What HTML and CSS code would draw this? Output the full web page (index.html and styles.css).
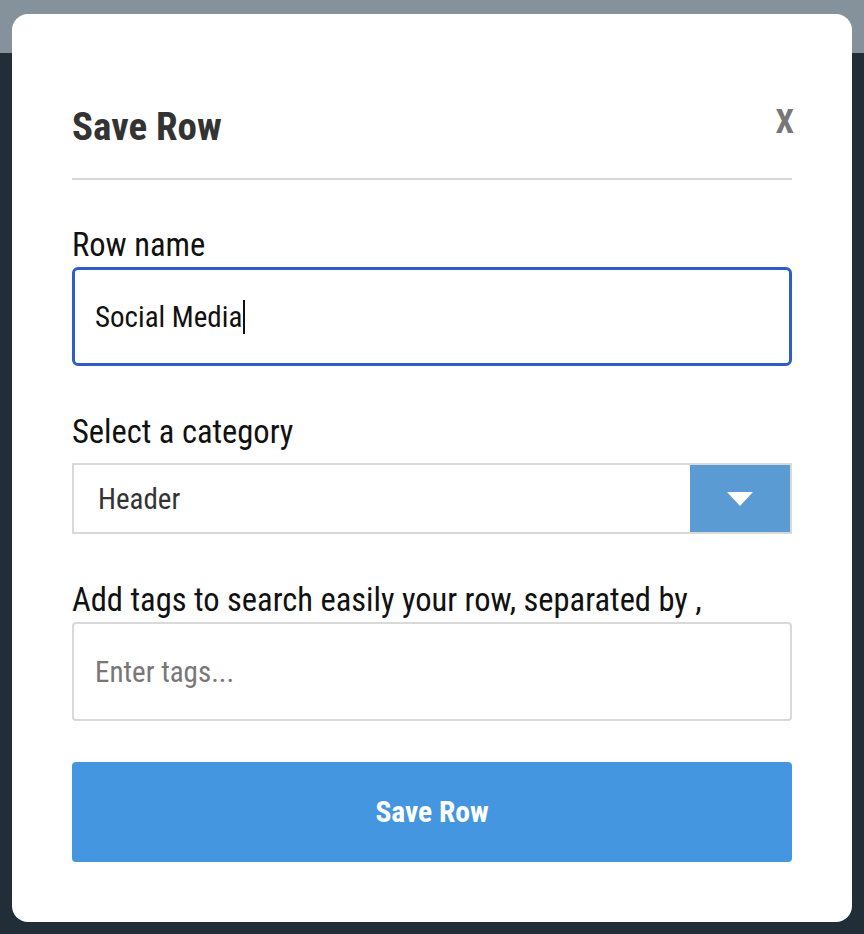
FILE: index.html
```html
<!DOCTYPE html>
<html lang="en">
  <head>
    <meta charset="UTF-8" />
    <meta name="viewport" content="width=device-width, initial-scale=1.0" />
    <title>Save Row</title>
    <link rel="stylesheet" href="styles.css">
  </head>
  <body>
    <div class="modal">
      <div class="modal-head">
        <h1>Save Row</h1>
        <span class="close">X</span>
      </div>
      <div class="field field-name">
        <label>Row name</label>
        <div class="text-box is-focused">Social Media<span class="caret"></span></div>
      </div>
      <div class="field field-category">
        <label>Select a category</label>
        <div class="select-box">
          <span class="select-value">Header</span>
          <span class="select-arrow"><span class="triangle"></span></span>
        </div>
      </div>
      <div class="field field-tags">
        <label>Add tags to search easily your row, separated by ,</label>
        <div class="text-box tags-box"><span class="placeholder">Enter tags...</span></div>
      </div>
      <button class="save-btn">Save Row</button>
    </div>
  </body>
</html>
```

FILE: styles.css
```css
html,
body {
  height: 100%;
  margin: 0;
}
body {
  background: linear-gradient(#85919b 0, #85919b 53px, #212e38 53px);
  font-family: "Roboto Condensed", Roboto, sans-serif;
  font-stretch: condensed;
}
.modal {
  margin: 14px 12px 0;
  padding: 89px 60px 60px;
  background-color: #fff;
  border-radius: 16px;
}
.modal-head {
  display: flex;
  justify-content: space-between;
  padding-bottom: 27px;
  border-bottom: 2px solid #d9d9d9;
}
.modal-head h1 {
  margin: 0;
  font-size: 39px;
  line-height: 48px;
  font-weight: 700;
  color: #333;
}
.close {
  margin-top: -5px;
  margin-right: -2px;
  font-size: 33px;
  line-height: 48px;
  font-weight: 700;
  color: #777;
}
.field label {
  display: block;
  font-size: 32.5px;
  line-height: 36px;
  color: #111;
}
.field-name {
  margin-top: 47px;
}
.field-category {
  margin-top: 48px;
}
.field-tags {
  margin-top: 48px;
}
.text-box {
  display: flex;
  align-items: center;
  box-sizing: border-box;
  height: 99px;
  margin-top: 4px;
  padding-left: 21px;
  border: 2px solid #d9d9d9;
  border-radius: 4px;
  font-size: 29px;
  color: #111;
}
.text-box.is-focused {
  padding-left: 20px;
  border: 3px solid #2b5fc7;
  border-radius: 6px;
}
.caret {
  display: inline-block;
  width: 2px;
  height: 34px;
  margin-left: 1px;
  background-color: #111;
}
.placeholder {
  color: #777;
}
.select-box {
  display: flex;
  box-sizing: border-box;
  height: 71px;
  margin-top: 13px;
  border: 2px solid #d9d9d9;
}
.select-value {
  flex: 1;
  display: flex;
  align-items: center;
  padding-left: 24px;
  font-size: 29px;
  color: #333;
}
.select-arrow {
  display: flex;
  align-items: center;
  justify-content: center;
  width: 100px;
  background-color: #5a9bd4;
}
.triangle {
  width: 0;
  height: 0;
  border-left: 13px solid transparent;
  border-right: 13px solid transparent;
  border-top: 14px solid #fff;
}
.save-btn {
  display: block;
  width: 100%;
  height: 100px;
  margin-top: 41px;
  border: none;
  border-radius: 4px;
  background-color: #4496e0;
  color: #fff;
  font-family: inherit;
  font-stretch: condensed;
  font-size: 29.5px;
  font-weight: 700;
}
```
